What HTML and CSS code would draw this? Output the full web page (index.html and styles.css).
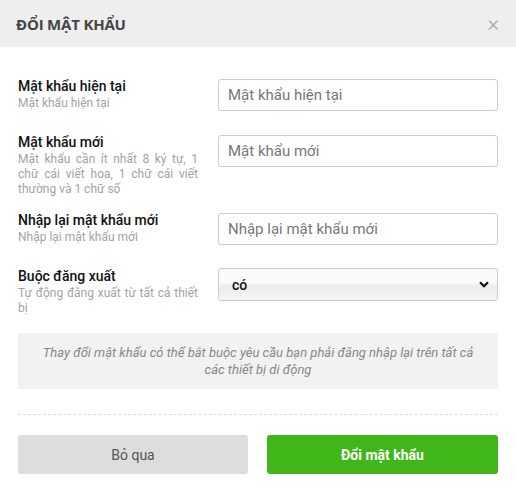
FILE: index.html
```html
<!DOCTYPE html>
<html lang="vi">
<head>
<meta charset="utf-8">
<link rel="stylesheet" href="styles.css">
</head>
<body>
<div class="modal">
  <div class="modal-header">
    <h2 class="modal-title">ĐỔI MẬT KHẨU</h2>
    <span class="close">&times;</span>
  </div>
  <div class="modal-body">
    <div class="row">
      <div class="label-col">
        <div class="label">Mật khẩu hiện tại</div>
        <div class="hint">Mật khẩu hiện tại</div>
      </div>
      <input class="field" type="password" placeholder="Mật khẩu hiện tại">
    </div>
    <div class="row">
      <div class="label-col">
        <div class="label">Mật khẩu mới</div>
        <div class="hint">Mật khẩu cần ít nhất 8 ký tự, 1 chữ cái viết hoa, 1 chữ cái viết thường và 1 chữ số</div>
      </div>
      <input class="field" type="password" placeholder="Mật khẩu mới">
    </div>
    <div class="row">
      <div class="label-col">
        <div class="label">Nhập lại mật khẩu mới</div>
        <div class="hint">Nhập lại mật khẩu mới</div>
      </div>
      <input class="field" type="password" placeholder="Nhập lại mật khẩu mới">
    </div>
    <div class="row">
      <div class="label-col">
        <div class="label">Buộc đăng xuất</div>
        <div class="hint">Tự động đăng xuất từ tất cả thiết bị</div>
      </div>
      <div class="select">
        <span>có</span>
        <svg class="chev" width="10" height="7" viewBox="0 0 10 7"><path d="M1 1.2 L5 5.2 L9 1.2" fill="none" stroke="#111" stroke-width="2.2"/></svg>
      </div>
    </div>
    <div class="notice">Thay đổi mật khẩu có thể bắt buộc yêu cầu bạn phải đăng nhập lại trên tất cả các thiết bị di động</div>
    <div class="divider"></div>
    <div class="actions">
      <button class="btn btn-cancel">Bỏ qua</button>
      <button class="btn btn-primary">Đổi mật khẩu</button>
    </div>
  </div>
</div>
</body>
</html>
```
FILE: styles.css
```css
* { box-sizing: border-box; }
body {
  margin: 0;
  background: #fff;
  font-family: Roboto, "Noto Sans", sans-serif;
  color: #111;
}
.modal { width: 516px; }
.modal-header {
  height: 47px;
  background: #eeeeee;
  display: flex;
  align-items: center;
  justify-content: space-between;
  padding: 0 17px 0 16px;
}
.modal-title {
  margin: 0;
  font-family: "Open Sans", sans-serif;
  font-size: 15px;
  font-weight: 700;
  color: #444;
  letter-spacing: -0.2px;
}
.close {
  font-size: 22px;
  color: #aaa;
  line-height: 1;
  font-weight: 300;
}
.modal-body {
  padding: 31px 18px 0 18px;
}
.row {
  display: grid;
  grid-template-columns: 180px 280px;
  column-gap: 20px;
  margin-bottom: 23px;
  align-items: start;
}
.row:nth-child(2) { margin-bottom: 15px; }
.row:nth-child(4) { margin-bottom: 0; }
.label {
  font-size: 14px;
  font-weight: 500;
  color: #111;
  line-height: 17px;
}
.hint {
  margin-top: 1px;
  font-size: 12px;
  color: #a3a3a3;
  line-height: 15px;
  text-align: justify;
}
.field {
  width: 280px;
  height: 32px;
  border: 1px solid #cccccc;
  border-radius: 3px;
  padding: 0 9px;
  font-family: Roboto, sans-serif;
  font-size: 15px;
  color: #333;
  background: #fff;
  outline: none;
  margin-top: 1px;
}
.field::placeholder { color: #777; }
.select {
  height: 33px;
  border: 1px solid #cccccc;
  border-radius: 3px;
  display: flex;
  align-items: center;
  justify-content: space-between;
  padding: 0 8px 0 13px;
  background: linear-gradient(#fafafa 0%, #fafafa 45%, #ececec 55%, #f5f5f5 100%);
  font-size: 14px;
  font-weight: 500;
  color: #111;
}
.notice {
  margin-top: 17px;
  background: #f2f2f2;
  height: 56px;
  display: flex;
  align-items: center;
  justify-content: center;
  text-align: center;
  padding: 0 22px;
  font-size: 13px;
  font-style: italic;
  color: #888;
  line-height: 17px;
}
.divider {
  margin-top: 25px;
  border-top: 1px dashed #dddddd;
}
.actions {
  margin-top: 20px;
  display: grid;
  grid-template-columns: 230px 231px;
  column-gap: 19px;
}
.btn {
  height: 39px;
  border: none;
  border-radius: 3px;
  font-family: Roboto, sans-serif;
  font-size: 14px;
}
.btn-cancel {
  background: #dddddd;
  color: #555;
}
.btn-primary {
  background: #41b619;
  color: #fff;
  font-weight: 700;
}
```
